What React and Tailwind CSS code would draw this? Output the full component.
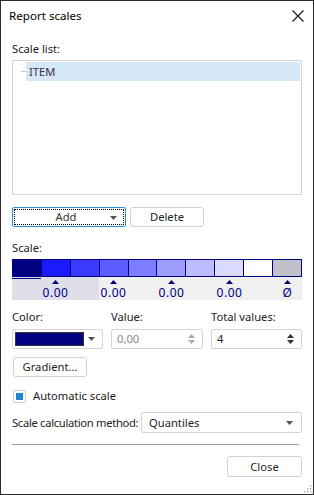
const segColors = [
  "bg-[#000080]",
  "bg-[#1a1aff]",
  "bg-[#3b3bff]",
  "bg-[#5c5cff]",
  "bg-[#7d7dff]",
  "bg-[#9e9eff]",
  "bg-[#bcbcff]",
  "bg-[#dadaff]",
  "bg-white",
  "bg-[#c0c0c8]",
];

function Caret({ className = "" }) {
  return (
    <svg width="7" height="4" viewBox="0 0 7 4" className={className}>
      <path d="M0 0h7L3.5 4z" fill="currentColor" />
    </svg>
  );
}

function Spin({ dark }) {
  const c = dark ? "text-[#333]" : "text-[#aaa]";
  return (
    <div className={"flex flex-col items-center gap-[2px] " + c}>
      <svg width="7" height="4" viewBox="0 0 7 4">
        <path d="M0 4h7L3.5 0z" fill="currentColor" />
      </svg>
      <svg width="7" height="4" viewBox="0 0 7 4">
        <path d="M0 0h7L3.5 4z" fill="currentColor" />
      </svg>
    </div>
  );
}

function Btn({ children, className = "" }) {
  return (
    <div
      className={
        "h-[20px] flex items-center justify-center border border-[#d2d2d2] rounded-[3px] bg-white text-[#222] " +
        className
      }
    >
      {children}
    </div>
  );
}

export default function App() {
  return (
    <div className="w-[314px] h-[495px] border border-[#2a2a2a] bg-white font-['Noto_Sans',sans-serif] text-[11.2px] leading-[16px] text-[#222] flex flex-col relative overflow-hidden">
      {/* title */}
      <div className="h-[30px] flex items-center justify-between pl-[8px] pr-[9px]">
        <span className="text-black text-[11.6px]">Report scales</span>
        <svg width="12" height="12" viewBox="0 0 12 12">
          <path d="M0.5 0.5l11 11M11.5 0.5l-11 11" stroke="#111" strokeWidth="1.1" />
        </svg>
      </div>

      <div className="px-[11px] flex flex-col">
        <div className="mt-[10px]">Scale list:</div>
        <div className="mt-[3px] h-[135px] border border-[#d4d4d4] pt-[1px] pr-[1px]">
          <div className="flex items-center h-[19px]">
            <div className="w-[13px] flex justify-end">
              <div className="w-[5px] h-px bg-[#c8c8c8]" />
            </div>
            <div className="flex-1 h-full bg-[#d5e8f6] flex items-center pl-[3px] text-[#3b2c4e]">
              ITEM
            </div>
          </div>
        </div>

        {/* add / delete */}
        <div className="mt-[12px] flex gap-[4px]">
          <div className="w-[114px] h-[20px] border border-[#2d8fd8] rounded-[2px] p-[1px]">
            <div className="h-full border border-dotted border-black flex items-center relative">
              <span className="flex-1 text-center pr-[6px] text-[#333]">Add</span>
              <Caret className="absolute right-[6px] top-[6px] text-[#555]" />
            </div>
          </div>
          <Btn className="w-[74px]">Delete</Btn>
        </div>

        {/* scale */}
        <div className="mt-[13px]">Scale:</div>
        <div className="mt-[3px] grid grid-cols-10 gap-px bg-[#000080] p-px h-[18px]">
          {segColors.map((c, i) => (
            <div key={i} className={c} />
          ))}
        </div>
        <div className="grid grid-cols-10 h-[23px] bg-[#f0f0f0]">
          {segColors.map((_, i) => (
            <div
              key={i}
              className={
                "relative flex flex-col items-center " +
                (i < 3 ? "bg-[#dfdfea]" : "")
              }
            >
              {i === 0 && <div className="absolute left-0 right-0 top-px h-px bg-[#000080]" />}
              {i % 2 === 1 && (
                <>
                  <svg width="7" height="4" viewBox="0 0 7 4" className="mt-[3px] text-[#000080]">
                    <path d="M0 4h7L3.5 0z" fill="currentColor" />
                  </svg>
                  <span className="mt-[2px] text-[#000080] whitespace-nowrap leading-[14px] text-[12px] tracking-[0.5px]">
                    {i === 9 ? "Ø" : "0.00"}
                  </span>
                </>
              )}
            </div>
          ))}
        </div>

        {/* color / value / total */}
        <div className="mt-[9px] flex gap-[8px]">
          <div className="w-[91px] flex flex-col">
            <span>Color:</span>
            <div className="mt-[4px] h-[20px] border border-[#d4d4d4] rounded-[2px] flex items-center pl-[2px] pr-[7px]">
              <div className="w-[69px] h-[14px] bg-[#000080] border border-[#333]" />
              <div className="flex-1" />
              <Caret className="text-[#555]" />
            </div>
          </div>
          <div className="w-[92px] flex flex-col">
            <span>Value:</span>
            <div className="mt-[4px] h-[20px] border border-[#d4d4d4] rounded-[2px] flex items-center pl-[5px] pr-[7px] justify-between">
              <span className="text-[#8a8a8a]">0,00</span>
              <Spin />
            </div>
          </div>
          <div className="w-[91px] flex flex-col">
            <span>Total values:</span>
            <div className="mt-[4px] h-[20px] border border-[#d4d4d4] rounded-[2px] flex items-center pl-[5px] pr-[7px] justify-between">
              <span className="text-[#222]">4</span>
              <Spin dark />
            </div>
          </div>
        </div>

        <Btn className="mt-[8px] ml-[1px] w-[74px]">Gradient...</Btn>

        {/* checkbox */}
        <div className="mt-[11px] flex items-center gap-[7px]">
          <div className="ml-[1px] w-[13px] h-[13px] border border-[#cfcfcf] rounded-[2px] flex items-center justify-center">
            <div className="w-[7px] h-[7px] bg-[#1f88d2]" />
          </div>
          <span>Automatic scale</span>
        </div>

        {/* method */}
        <div className="mt-[8px] flex items-center justify-between">
          <span className="whitespace-nowrap tracking-[-0.3px]">Scale calculation method:</span>
          <div className="w-[161px] shrink-0 h-[21px] border border-[#d4d4d4] rounded-[2px] flex items-center justify-between pl-[7px] pr-[8px]">
            <span>Quantiles</span>
            <Caret className="text-[#555]" />
          </div>
        </div>

        <div className="mt-[11px] mr-[3px] h-px bg-[#a0a0a0]" />

        <div className="mt-[11px] flex justify-end">
          <Btn className="w-[75px] h-[21px]">Close</Btn>
        </div>
      </div>

      {/* resize grip */}
      <svg width="10" height="10" viewBox="0 0 10 10" className="absolute right-[1px] bottom-[1px]">
        {[
          [8, 2],
          [8, 5],
          [5, 5],
          [8, 8],
          [5, 8],
          [2, 8],
        ].map(([x, y], i) => (
          <rect key={i} x={x} y={y} width="1.5" height="1.5" fill="#b8b8b8" />
        ))}
      </svg>
    </div>
  );
}
